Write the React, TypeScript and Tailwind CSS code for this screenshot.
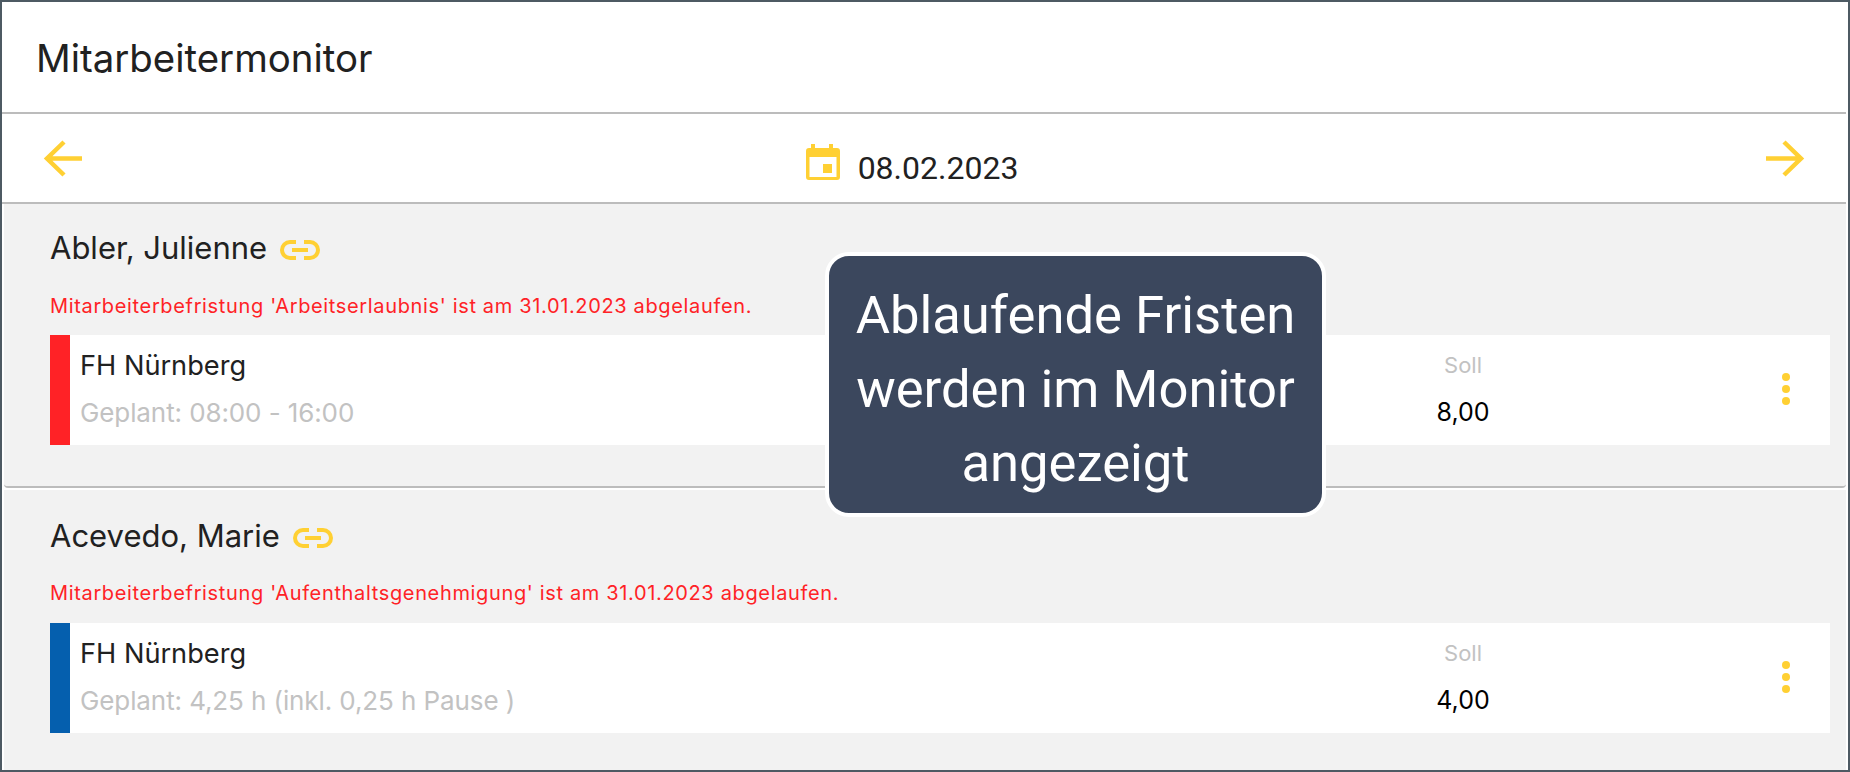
const yellow = '#ffd033'

function LinkIcon() {
  return (
    <svg width="40" height="20" viewBox="0 0 40 20" fill="none" stroke="#ffd033" strokeWidth="4" className="ml-[13px] mt-[3px]">
      <path d="M16 2H10a8 8 0 0 0 0 16h6" />
      <path d="M24 2h6a8 8 0 0 1 0 16h-6" />
      <path d="M12 10h16" />
    </svg>
  )
}

function Dots() {
  return (
    <div className="flex flex-col gap-[4px]">
      <span className="w-2 h-2 rounded-full bg-[#ffd033]" />
      <span className="w-2 h-2 rounded-full bg-[#ffd033]" />
      <span className="w-2 h-2 rounded-full bg-[#ffd033]" />
    </div>
  )
}

function Person({ name, warning, bar, planned, soll, last }: { name: string; warning: string; bar: string; planned: string; soll: string; last?: boolean }) {
  return (
    <section className={`mx-[2px] bg-[#f2f2f2] pl-[46px] pr-[16px] ${last ? 'h-[280px] pt-[26px]' : 'h-[284px] pt-[24px] border-b-[2px] border-[#bcbcbc] rounded-b-[4px] mb-[2px]'}`}>
      <div className="flex items-center h-[40px] text-[31px] text-[#212121]">
        {name}
        <LinkIcon />
      </div>
      <p className={`h-[24px] leading-[24px] text-[20px] tracking-[0.65px] text-[#ff2226] ${last ? 'mt-[25px]' : 'mt-[26px]'}`}>{warning}</p>
      <div className={`h-[110px] flex bg-white ${last ? 'mt-[18px]' : 'mt-[17px]'}`}>
        <div className={`w-[20px] ${bar}`} />
        <div className="flex-1 pl-[10px] pt-[15px]">
          <div className="h-[32px] leading-[32px] text-[27.2px] text-[#212121]">FH Nürnberg</div>
          <div className="mt-[15px] h-[32px] leading-[32px] text-[26px] tracking-[-0.1px] text-[#c2c2c2]">{planned}</div>
        </div>
        <div className="w-[120px] mr-[259px] flex flex-col items-center pt-[16px]">
          <div className="h-[28px] leading-[28px] text-[22px] text-[#c2c2c2]">Soll</div>
          <div className="mt-[18px] h-[30px] leading-[30px] text-[25px] text-black">{soll}</div>
        </div>
        <div className="w-[48px] flex items-start pt-[38px]">
          <Dots />
        </div>
      </div>
    </section>
  )
}

export default function App() {
  return (
    <div className="relative w-[1850px] h-[772px] overflow-hidden bg-white border-2 border-[#4d5a63]" style={{ fontFamily: 'Inter, sans-serif' }}>
      <header className="h-[112px] pl-[34px] pt-[4px] flex items-center border-b-[2px] border-[#bcbcbc] mr-[2px] text-[38.4px] text-[#212121]">
        Mitarbeitermonitor
      </header>
      <div className="relative h-[90px] flex items-start justify-center border-b-[2px] border-[#bcbcbc] mr-[2px]">
        <svg width="40" height="40" viewBox="0 0 40 40" fill="none" stroke={yellow} strokeWidth="4.500" className="absolute left-[40px] top-[25px]">
          <path d="M22 3 5 19.5 22 36M5 19.5h35" />
        </svg>
        <svg width="40" height="40" viewBox="0 0 40 40" fill="none" stroke={yellow} strokeWidth="4.500" className="absolute left-[1764px] top-[25px]">
          <path d="M18 3 35 19.5 18 36M35 19.5H0" />
        </svg>
        <div className="flex items-start pt-[30px] mr-[24px]">
          <svg width="34" height="36" viewBox="0 0 34 36" className="mr-[18px]">
            <path fill={yellow} d="M5 0h4v4h14V0h4v4h4a3 3 0 0 1 3 3v26a3 3 0 0 1-3 3H3a3 3 0 0 1-3-3V7a3 3 0 0 1 3-3h2z" />
            <path fill="#fff" d="M3.500 13h27v20h-27z" />
            <path fill={yellow} d="M17 20h9v9h-9z" />
          </svg>
          <span className="mt-[5px] leading-[38px] text-[32px] text-[#212121]" style={{ fontFamily: 'Roboto, sans-serif' }}>08.02.2023</span>
        </div>
      </div>
      <Person name="Abler, Julienne" warning="Mitarbeiterbefristung 'Arbeitserlaubnis' ist am 31.01.2023 abgelaufen." bar="bg-[#ff2226]" planned="Geplant: 08:00 - 16:00" soll="8,00" />
      <Person name="Acevedo, Marie" warning="Mitarbeiterbefristung 'Aufenthaltsgenehmigung' ist am 31.01.2023 abgelaufen." bar="bg-[#055fae]" planned="Geplant: 4,25 h (inkl. 0,25 h Pause )" soll="4,00" last />
      <div className="absolute left-[823px] top-[250px] w-[501px] h-[265px] pt-[8px] rounded-[24px] border-4 border-white bg-[#3b475d] flex flex-col items-center justify-center text-white text-[52.6px] leading-[74px] text-center" style={{ fontFamily: 'Roboto, sans-serif' }}>
        <span>Ablaufende Fristen</span>
        <span>werden im Monitor</span>
        <span>angezeigt</span>
      </div>
    </div>
  )
}
